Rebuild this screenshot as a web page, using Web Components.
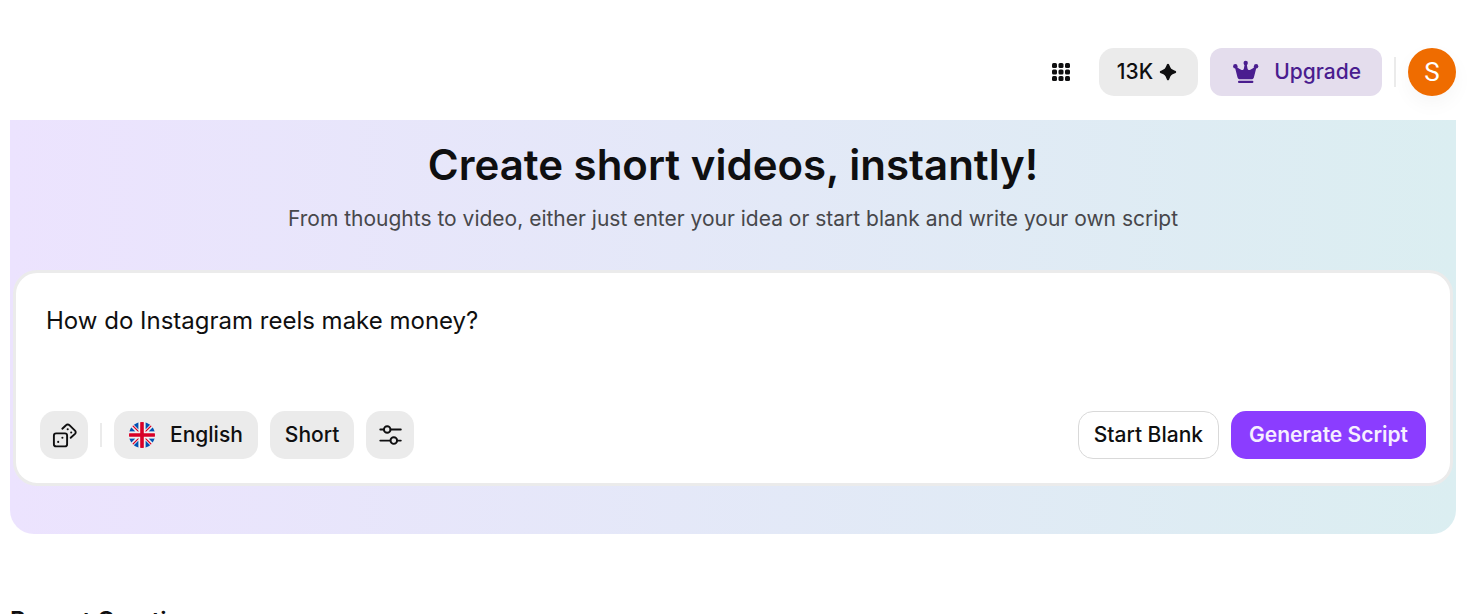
<!DOCTYPE html>
<html lang="en">
<head>
<meta charset="utf-8">
<title>Create short videos</title>
<style>
    html {
        overflow: hidden;
    }
    body {
        margin: 0;
        padding: 48px 15px 0 10px;
        background: #fff;
        color: #0f0f10;
        font-family: Inter, "Liberation Sans", sans-serif;
        font-size: 21px;
        line-height: 32px;
    }
</style>
</head>
<body>
<app-header></app-header>
<main>
    <create-panel heading="Create short videos, instantly!">
        <span slot="subtitle">From thoughts to video, either just enter your idea or start blank and write your own script</span>
        <prompt-card value="How do Instagram reels make money?"></prompt-card>
    </create-panel>
    <section-title>Recent Creations</section-title>
</main>

<script>
class PillButton extends HTMLElement {
    constructor() {
        super();
        this.attachShadow({ mode: 'open' });
    }

    connectedCallback() {
        const label = this.getAttribute('label');

        this.shadowRoot.innerHTML = `
            <style>
                :host {
                    display: block;
                    flex: none;
                }
                button {
                    display: flex;
                    align-items: center;
                    justify-content: center;
                    gap: 15px;
                    box-sizing: border-box;
                    height: 48px;
                    min-width: 48px;
                    margin: 0;
                    padding: 0 15px;
                    border: 0;
                    border-radius: 15px;
                    background: #ebebeb;
                    color: inherit;
                    font: inherit;
                    font-weight: 500;
                    white-space: nowrap;
                    cursor: pointer;
                }
                :host([kind="icon"]) button {
                    width: 48px;
                    padding: 0;
                }
                :host([kind="plain"]) button {
                    width: 52px;
                    padding: 0;
                    background: none;
                }
                :host([kind="credits"]) button {
                    gap: 6px;
                    padding: 0 21px 0 18px;
                }
                :host([kind="upgrade"]) button {
                    padding: 0 21px;
                    border-radius: 12px;
                    background: #e4dded;
                    color: #4a1d8f;
                }
                :host([kind="outline"]) button {
                    border: 1px solid #d9d9d9;
                    background: #fff;
                }
                :host([kind="primary"]) button {
                    padding: 0 18px;
                    background: #8b3dff;
                    color: #f6efff;
                    font-weight: 600;
                }
            </style>
            <button type="button"><slot></slot></button>
        `;
        if (label) {
            this.shadowRoot.querySelector('button').setAttribute('aria-label', label);
        }
    }
}

customElements.define('pill-button', PillButton);

class AppHeader extends HTMLElement {
    constructor() {
        super();
        this.attachShadow({ mode: 'open' });
    }

    connectedCallback() {
        this.shadowRoot.innerHTML = `
            <style>
                :host {
                    display: block;
                }
                header {
                    display: flex;
                    align-items: center;
                    justify-content: flex-end;
                    gap: 12px;
                    padding-bottom: 24px;
                }
                svg {
                    display: block;
                    flex: none;
                }
                .divider {
                    width: 2px;
                    height: 30px;
                    background: #ebebeb;
                }
                .avatar {
                    width: 48px;
                    height: 48px;
                    padding: 0;
                    border: 0;
                    border-radius: 50%;
                    background: #ef6c00;
                    box-shadow: 0 8px 20px rgba(0, 0, 0, 0.04);
                    color: #fff;
                    font: 26px/48px Roboto, sans-serif;
                    cursor: pointer;
                }
            </style>
            <header>
                <pill-button kind="plain" label="Apps">
                    <svg width="20" height="20" viewBox="0 0 20 20" fill="#0f0f10">
                        <rect x="1" y="1" width="5" height="5" rx="1.5"/>
                        <rect x="7.5" y="1" width="5" height="5" rx="1.5"/>
                        <rect x="14" y="1" width="5" height="5" rx="1.5"/>
                        <rect x="1" y="7.5" width="5" height="5" rx="1.5"/>
                        <rect x="7.5" y="7.5" width="5" height="5" rx="1.5"/>
                        <rect x="14" y="7.5" width="5" height="5" rx="1.5"/>
                        <rect x="1" y="14" width="5" height="5" rx="1.5"/>
                        <rect x="7.5" y="14" width="5" height="5" rx="1.5"/>
                        <rect x="14" y="14" width="5" height="5" rx="1.5"/>
                    </svg>
                </pill-button>
                <pill-button kind="credits">13K
                    <svg width="18" height="18" viewBox="0 0 18 18" fill="#0f0f10">
                        <path d="M9 .8c.9 0 1.100.8 1.500 1.800 1.100 2.900 2 3.800 4.900 4.900 1 .4 1.800.6 1.800 1.500s-.8 1.100-1.800 1.500c-2.900 1.100-3.800 2-4.900 4.900-.4 1-.6 1.800-1.500 1.800s-1.100-.8-1.500-1.800c-1.100-2.900-2-3.800-4.900-4.900C1.600 10.100.8 9.900.8 9s.8-1.100 1.800-1.500c2.900-1.100 3.800-2 4.900-4.900C7.900 1.600 8.100.8 9 .8z"/>
                    </svg>
                </pill-button>
                <pill-button kind="upgrade">
                    <svg width="28" height="24" viewBox="0 0 28 24" fill="#4a1d8f">
                        <circle cx="14.700" cy="3" r="2.200"/>
                        <circle cx="4.300" cy="6.300" r="2.200"/>
                        <circle cx="25.100" cy="6.300" r="2.200"/>
                        <path d="M13.700 4h2l.8 4.400c.3 1.400 1.500 2 2.800 1.400 1.600-.7 3-1.700 4.500-3.100l1.600.7-2.400 9.500c-.3 1.500-1.300 2.400-2.700 2.400H9.100c-1.400 0-2.400-.9-2.700-2.400L4 7.400l1.600-.7c1.500 1.400 2.900 2.400 4.500 3.100 1.300.6 2.500 0 2.800-1.400z"/>
                        <rect x="7" y="20.800" width="15.400" height="2.200" rx="1"/>
                    </svg>
                    Upgrade
                </pill-button>
                <div class="divider"></div>
                <button class="avatar" type="button">S</button>
            </header>
        `;
    }
}

customElements.define('app-header', AppHeader);

class CreatePanel extends HTMLElement {
    constructor() {
        super();
        this.attachShadow({ mode: 'open' });
    }

    connectedCallback() {
        this.shadowRoot.innerHTML = `
            <style>
                :host {
                    display: block;
                    padding: 18px 3px 48px;
                    border-radius: 0 0 24px 24px;
                    background: linear-gradient(90deg, #ece3fe, #dbeef1);
                    text-align: center;
                }
                h1 {
                    margin: 0;
                    font-size: 42px;
                    font-weight: 600;
                    line-height: 54px;
                }
                p {
                    margin: 11px 0 35px;
                    color: #47474b;
                }
            </style>
            <h1>${this.getAttribute('heading')}</h1>
            <p><slot name="subtitle"></slot></p>
            <slot></slot>
        `;
    }
}

customElements.define('create-panel', CreatePanel);

class PromptCard extends HTMLElement {
    constructor() {
        super();
        this.attachShadow({ mode: 'open' });
    }

    connectedCallback() {
        this.shadowRoot.innerHTML = `
            <style>
                :host {
                    display: block;
                    padding: 24px;
                    border: 3px solid #ebebeb;
                    border-radius: 24px;
                    background: #fff;
                    text-align: left;
                }
                textarea {
                    display: block;
                    box-sizing: border-box;
                    width: 100%;
                    height: 114px;
                    margin: 0;
                    padding: 6px;
                    border: 0;
                    outline: 0;
                    background: none;
                    color: inherit;
                    font: inherit;
                    font-size: 24px;
                    line-height: 36px;
                    resize: none;
                }
                .row, .group {
                    display: flex;
                    align-items: center;
                    gap: 12px;
                }
                .row {
                    justify-content: space-between;
                }
                .divider {
                    width: 2px;
                    height: 24px;
                    background: #ebebeb;
                }
                svg {
                    display: block;
                    flex: none;
                }
            </style>
            <textarea aria-label="Video idea"></textarea>
            <div class="row">
                <div class="group">
                    <pill-button kind="icon" label="Random idea">
                        <svg width="26" height="26" viewBox="0 0 26 26" fill="none" stroke="#0f0f10" stroke-width="1.900" stroke-linecap="round" stroke-linejoin="round">
                            <rect x="2.900" y="11.400" width="13.200" height="13" rx="2.200"/>
                            <path d="M11.300 6.700l3.700-3.500a2.400 2.400 0 0 1 3.400 0l5.600 5.400a2.300 2.300 0 0 1 0 3.300l-4.300 3.900"/>
                            <path d="M11.400 15.700h.01M7.200 19.900h.01M16.700 7.300h.01M20.200 10.500h.01" stroke-width="2.100"/>
                        </svg>
                    </pill-button>
                    <div class="divider"></div>
                    <pill-button>
                        <svg width="26" height="26" viewBox="0 0 26 26">
                            <defs><clipPath id="round"><circle cx="13" cy="13" r="13"/></clipPath></defs>
                            <g clip-path="url(#round)">
                                <rect width="26" height="26" fill="#f0f0f0"/>
                                <path fill="#0052b4" d="M9.500 0v7.400L3.100 1H0v2.100L6.400 9.500H0V0zM16.500 0v7.400L22.900 1H26v2.100l-6.400 6.400H26V0zM9.500 26v-7.400L3.100 25H0v-2.100l6.400-6.400H0V26zM16.500 26v-7.400l6.400 6.400H26v-2.100l-6.400-6.400H26V26z"/>
                                <path stroke="#d80027" stroke-width="1.200" d="M2 2l7.600 7.600M24 2l-7.600 7.600M2 24l7.600-7.600M24 24l-7.600-7.600"/>
                                <path stroke="#f0f0f0" stroke-width="6.400" d="M13 0v26M0 13h26"/>
                                <path stroke="#d80027" stroke-width="3.600" d="M13 0v26M0 13h26"/>
                            </g>
                        </svg>
                        English
                    </pill-button>
                    <pill-button>Short</pill-button>
                    <pill-button kind="icon" label="Settings">
                        <svg width="24" height="24" viewBox="0 0 24 24" fill="none" stroke="#0f0f10" stroke-width="1.900" stroke-linecap="round">
                            <path d="M2.300 6.500h3.500M12.600 6.500h10.200M2.300 17.600h10M19.200 17.600h3.600"/>
                            <circle cx="9.200" cy="6.500" r="3.300"/>
                            <circle cx="15.800" cy="17.600" r="3.300"/>
                        </svg>
                    </pill-button>
                </div>
                <div class="group">
                    <pill-button kind="outline">Start Blank</pill-button>
                    <pill-button kind="primary">Generate Script</pill-button>
                </div>
            </div>
        `;
        this.shadowRoot.querySelector('textarea').value = this.getAttribute('value');
    }
}

customElements.define('prompt-card', PromptCard);

class SectionTitle extends HTMLElement {
    constructor() {
        super();
        this.attachShadow({ mode: 'open' });
    }

    connectedCallback() {
        this.shadowRoot.innerHTML = `
            <style>
                :host {
                    display: block;
                    padding-top: 69px;
                }
                h2 {
                    margin: 0;
                    font-size: 24px;
                    font-weight: 600;
                    line-height: 36px;
                }
            </style>
            <h2><slot></slot></h2>
        `;
    }
}

customElements.define('section-title', SectionTitle);
</script>
</body>
</html>
